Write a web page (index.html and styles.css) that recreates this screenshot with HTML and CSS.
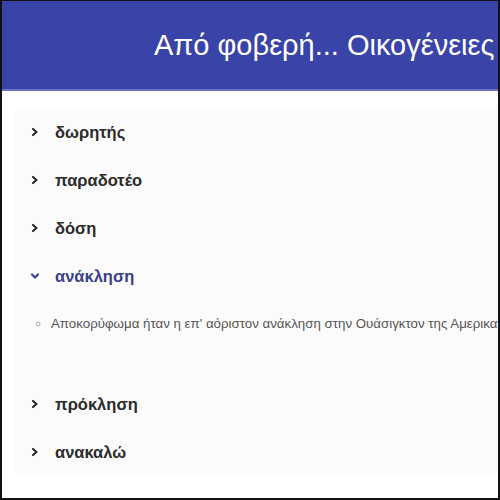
FILE: index.html
```html
<!DOCTYPE html>
<html lang="el">
  <head>
    <meta charset="UTF-8" />
    <meta name="viewport" content="width=device-width, initial-scale=1.0" />
    <title>Οικογένειες</title>
    <link rel="stylesheet" href="styles.css">
  </head>
  <body>
    <div class="frame">
      <header class="topbar">
        <h1>Από φοβερή... Οικογένειες</h1>
      </header>

      <!-- accordion -->
      <div class="accordion">
        <div class="item">
          <div class="item-head">
            <svg class="chev" viewBox="0 0 10 10"><path d="M3 2l3.5 3L3 8"/></svg>
            <span>δωρητής</span>
          </div>
        </div>
        <div class="item">
          <div class="item-head">
            <svg class="chev" viewBox="0 0 10 10"><path d="M3 2l3.5 3L3 8"/></svg>
            <span>παραδοτέο</span>
          </div>
        </div>
        <div class="item">
          <div class="item-head">
            <svg class="chev" viewBox="0 0 10 10"><path d="M3 2l3.5 3L3 8"/></svg>
            <span>δόση</span>
          </div>
        </div>
        <div class="item open">
          <div class="item-head">
            <svg class="chev" viewBox="0 0 10 10"><path d="M2 3.5l3 3 3-3"/></svg>
            <span>ανάκληση</span>
          </div>
          <ul class="item-body">
            <li>Αποκορύφωμα ήταν η επ' αόριστον ανάκληση στην Ουάσιγκτον της Αμερικανίδας πρέσβειρας</li>
          </ul>
        </div>
        <div class="item">
          <div class="item-head">
            <svg class="chev" viewBox="0 0 10 10"><path d="M3 2l3.5 3L3 8"/></svg>
            <span>πρόκληση</span>
          </div>
        </div>
        <div class="item">
          <div class="item-head">
            <svg class="chev" viewBox="0 0 10 10"><path d="M3 2l3.5 3L3 8"/></svg>
            <span>ανακαλώ</span>
          </div>
        </div>
      </div>
    </div>
  </body>
</html>
```

FILE: styles.css
```css
html,
body {
  margin: 0;
  padding: 0;
}

body {
  background: #fff;
  font-family: "Liberation Sans", Arial, sans-serif;
}

.frame {
  box-sizing: border-box;
  width: 500px;
  height: 500px;
  border: 2px solid #111;
  border-top-width: 1px;
  overflow: hidden;
  background: #fff;
}

.topbar {
  height: 88px;
  background: #3a43a8;
  border-bottom: 2px solid #6970c4;
  display: flex;
  align-items: center;
}

.topbar h1 {
  margin: 0;
  padding-left: 152px;
  color: #fff;
  font-size: 29px;
  font-weight: normal;
  white-space: nowrap;
}

.accordion {
  margin: 17px 0 0 13px;
  display: flex;
  flex-direction: column;
  gap: 2px;
  background: #fff;
}

.item {
  background: #fbfbfb;
  box-shadow: 0 0 1px #f0f0f0;
}

.item-head {
  height: 46px;
  display: flex;
  align-items: center;
  padding-left: 15px;
  padding-top: 2px;
  box-sizing: border-box;
  font-size: 16.5px;
  font-weight: bold;
  color: #2b2b2b;
}

.item-head span {
  margin-left: 15px;
}

.chev {
  width: 10px;
  height: 10px;
  fill: none;
  stroke: #2b2b2b;
  stroke-width: 2.2;
  stroke-linecap: round;
  stroke-linejoin: round;
}

.open .item-head {
  color: #3b3f8c;
}

.open .chev {
  stroke: #3b3f8c;
}

.item-body {
  margin: 0;
  height: 80px;
  box-sizing: border-box;
  padding: 18px 0 0 36px;
  list-style: circle;
  font-size: 13.3px;
  color: #555;
  white-space: nowrap;
}

.item-body li::marker {
  color: #aaa;
}
```
